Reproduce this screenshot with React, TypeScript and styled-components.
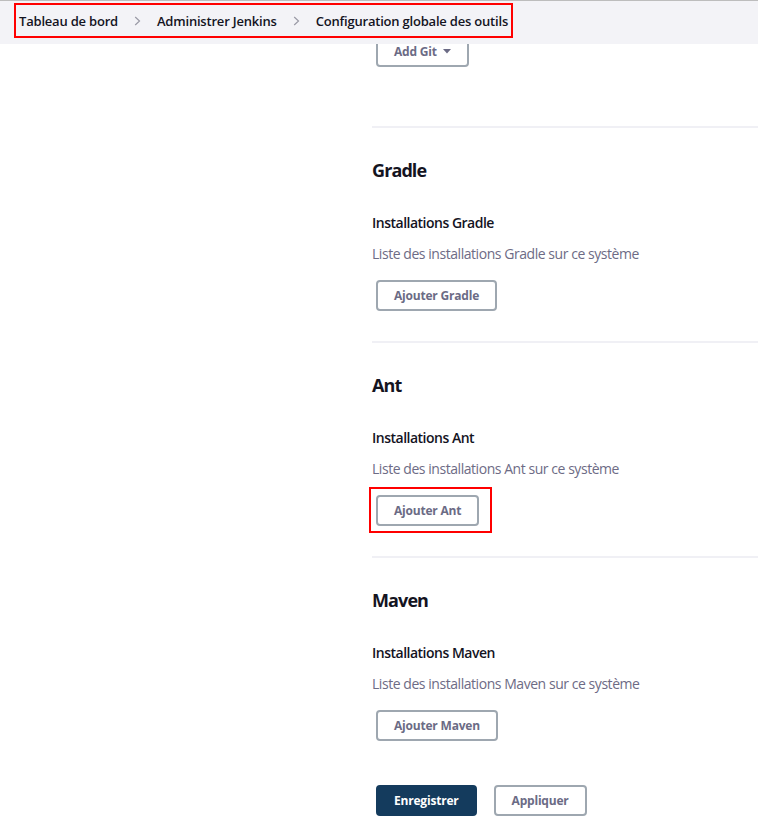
import React from "react";
import styled, { createGlobalStyle } from "styled-components";

const Global = createGlobalStyle`
  html, body { margin: 0; padding: 0; background: #fff; }
  body { font-family: "Open Sans", "Noto Sans", sans-serif; color: #14141f; }
  * { box-sizing: border-box; }
`;

const Page = styled.div`
  width: 758px;
  height: 839px;
  overflow: hidden;
  display: flex;
  flex-direction: column;
`;

const TopBar = styled.header`
  height: 44px;
  flex: none;
  background: #f3f3f7;
  border-top: 1px solid #bdbdbd;
  padding: 2px 0 0 14px;
  display: flex;
  align-items: flex-start;
`;

const Crumbs = styled.nav`
  height: 35px;
  border: 2px solid #ff0000;
  display: flex;
  align-items: center;
  padding: 0 3px 0 3px;
  gap: 16px;
  font-size: 13px;
  font-weight: 600;
  letter-spacing: -0.2px;
  color: #14141f;
`;

const Crumb = styled.span`
  white-space: nowrap;
`;

const Chevron = () => (
  <svg width="7" height="10" viewBox="0 0 7 10" fill="none">
    <path d="M1.2 1 L5.5 5 L1.2 9" stroke="#9a9aa6" strokeWidth="1.2" />
  </svg>
);

const Body = styled.main`
  flex: 1;
  overflow: hidden;
  padding-left: 372px;
`;

const Button = styled.button<{ $primary?: boolean }>`
  height: 31px;
  padding: 0 16px;
  border-radius: 4px;
  font-family: inherit;
  font-size: 12px;
  font-weight: 700;
  letter-spacing: -0.2px;
  display: inline-flex;
  align-items: center;
  gap: 6px;
  cursor: pointer;
  border: 2px solid ${(p) => (p.$primary ? "#143b5d" : "#9ea7b0")};
  background: ${(p) => (p.$primary ? "#143b5d" : "#fff")};
  color: ${(p) => (p.$primary ? "#fff" : "#6b6b85")};
`;

const Highlight = styled.div`
  display: inline-block;
  padding: 6px 11px 5px 5px;
  margin: -8px -13px -7px -7px;
  border: 2px solid #ff0000;
`;

const GitRow = styled.div`
  margin-top: -8px;
  padding-left: 4px;
`;

const Section = styled.section`
  border-top: 2px solid #f0f0f5;
  padding-top: 30px;
  margin-top: 30px;
`;

const FirstSection = styled(Section)`
  margin-top: 59px;
`;

const Title = styled.h2`
  margin: 0;
  font-size: 18px;
  font-weight: 700;
  letter-spacing: -0.9px;
  line-height: 24px;
`;

const Label = styled.div`
  margin-top: 31px;
  font-size: 14px;
  font-weight: 600;
  letter-spacing: -0.5px;
  line-height: 20px;
`;

const Desc = styled.div`
  margin-top: 11px;
  font-size: 14px;
  letter-spacing: -0.45px;
  color: #6d6b85;
  line-height: 20px;
`;

const Actions = styled.div`
  margin-top: 16px;
  padding-left: 4px;
`;

const Footer = styled.div`
  margin-top: 44px;
  padding-left: 4px;
  display: flex;
  gap: 17px;
`;

const Caret = () => (
  <svg width="8" height="5" viewBox="0 0 8 5">
    <path d="M0 0 H8 L4 4.5 Z" fill="#6b6b85" />
  </svg>
);

const tools = [
  { name: "Gradle" },
  { name: "Ant", outline: true },
  { name: "Maven" },
];

export default function App() {
  return (
    <>
      <Global />
      <Page>
        <TopBar>
          <Crumbs>
            <Crumb>Tableau de bord</Crumb>
            <Chevron />
            <Crumb>Administrer Jenkins</Crumb>
            <Chevron />
            <Crumb>Configuration globale des outils</Crumb>
          </Crumbs>
        </TopBar>
        <Body>
          <GitRow>
            <Button>
              Add Git <Caret />
            </Button>
          </GitRow>
          {tools.map((t, i) => {
            const S = i === 0 ? FirstSection : Section;
            const btn = <Button>Ajouter {t.name}</Button>;
            return (
              <S key={t.name}>
                <Title>{t.name}</Title>
                <Label>Installations {t.name}</Label>
                <Desc>Liste des installations {t.name} sur ce système</Desc>
                <Actions>
                  {t.outline ? <Highlight>{btn}</Highlight> : btn}
                </Actions>
              </S>
            );
          })}
          <Footer>
            <Button $primary>Enregistrer</Button>
            <Button>Appliquer</Button>
          </Footer>
        </Body>
      </Page>
    </>
  );
}
